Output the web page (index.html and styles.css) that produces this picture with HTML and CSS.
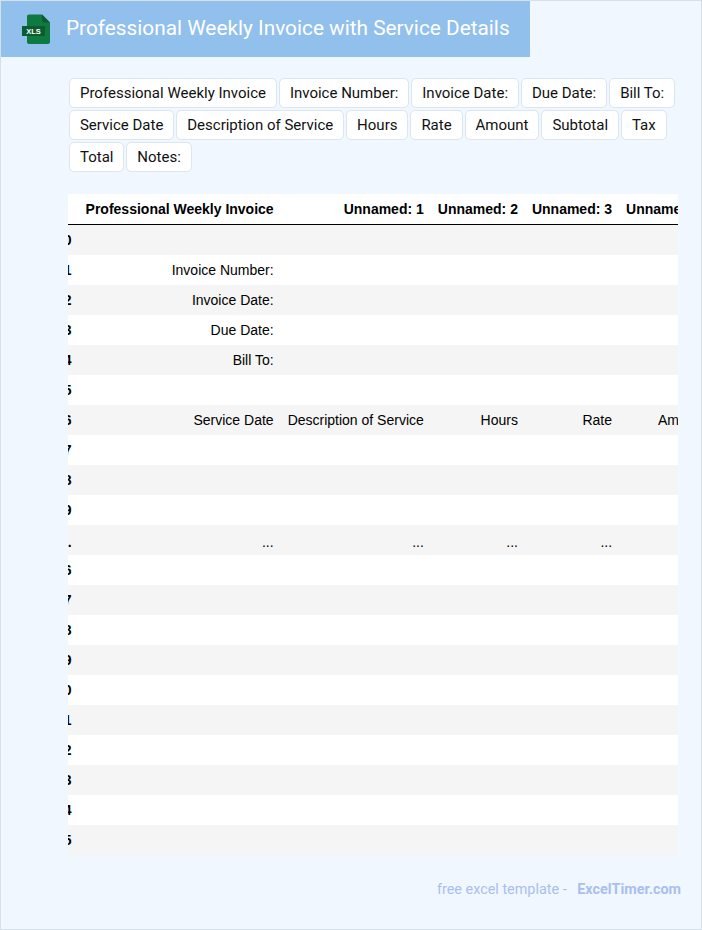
FILE: index.html
```html
<!DOCTYPE html>
<html lang="en">
<head>
<meta charset="utf-8">
<title>Professional Weekly Invoice with Service Details</title>
<link rel="stylesheet" href="styles.css">
</head>
<body>
<div class="page">
  <header class="banner">
    <svg class="logo" width="30" height="30" viewBox="0 0 30 30" aria-hidden="true">
      <path d="M6 2.500C6 1.400 6.900 0.500 8 0.500H21L29 8.500V28C29 29.100 28.100 30 27 30H8C6.900 30 6 29.100 6 28Z" fill="#0f7a40"/>
      <path d="M21 0.500L29 8.500H23C21.900 8.500 21 7.600 21 6.500Z" fill="#0b5c30"/>
      <rect x="1" y="12" width="23" height="10" fill="#0b5c30"/>
      <text class="logo-text" x="12.500" y="20" text-anchor="middle">XLS</text>
    </svg>
    <h1 class="title">Professional Weekly Invoice with Service Details</h1>
  </header>
  <main class="content">
    <nav class="chips">
      <span class="chip">Professional Weekly Invoice</span>
      <span class="chip">Invoice Number:</span>
      <span class="chip">Invoice Date:</span>
      <span class="chip">Due Date:</span>
      <span class="chip">Bill To:</span>
      <span class="chip">Service Date</span>
      <span class="chip">Description of Service</span>
      <span class="chip">Hours</span>
      <span class="chip">Rate</span>
      <span class="chip">Amount</span>
      <span class="chip">Subtotal</span>
      <span class="chip">Tax</span>
      <span class="chip">Total</span>
      <span class="chip">Notes:</span>
    </nav>
    <div class="table-wrap">
      <table class="sheet">
        <thead>
          <tr><th></th><th>Professional Weekly Invoice</th><th>Unnamed: 1</th><th>Unnamed: 2</th><th>Unnamed: 3</th><th>Unnamed: 4</th></tr>
        </thead>
        <tbody>
          <tr><th>0</th><td></td><td></td><td></td><td></td><td></td></tr>
          <tr><th>1</th><td>Invoice Number:</td><td></td><td></td><td></td><td></td></tr>
          <tr><th>2</th><td>Invoice Date:</td><td></td><td></td><td></td><td></td></tr>
          <tr><th>3</th><td>Due Date:</td><td></td><td></td><td></td><td></td></tr>
          <tr><th>4</th><td>Bill To:</td><td></td><td></td><td></td><td></td></tr>
          <tr><th>5</th><td></td><td></td><td></td><td></td><td></td></tr>
          <tr><th>6</th><td>Service Date</td><td>Description of Service</td><td>Hours</td><td>Rate</td><td>Amount</td></tr>
          <tr><th>7</th><td></td><td></td><td></td><td></td><td></td></tr>
          <tr><th>8</th><td></td><td></td><td></td><td></td><td></td></tr>
          <tr><th>9</th><td></td><td></td><td></td><td></td><td></td></tr>
          <tr class="ellipsis"><th>...</th><td>...</td><td>...</td><td>...</td><td>...</td><td>...</td></tr>
          <tr><th>16</th><td></td><td></td><td></td><td></td><td></td></tr>
          <tr><th>17</th><td></td><td></td><td></td><td></td><td></td></tr>
          <tr><th>18</th><td></td><td></td><td></td><td></td><td></td></tr>
          <tr><th>19</th><td></td><td></td><td></td><td></td><td></td></tr>
          <tr><th>20</th><td></td><td></td><td></td><td></td><td></td></tr>
          <tr><th>21</th><td></td><td></td><td></td><td></td><td></td></tr>
          <tr><th>22</th><td></td><td></td><td></td><td></td><td></td></tr>
          <tr><th>23</th><td></td><td></td><td></td><td></td><td></td></tr>
          <tr><th>24</th><td></td><td></td><td></td><td></td><td></td></tr>
          <tr><th>25</th><td></td><td></td><td></td><td></td><td></td></tr>
        </tbody>
      </table>
    </div>
  </main>
  <footer class="footer">
    <span class="footer-label">free excel template -</span>
    <span class="footer-brand">ExcelTimer.com</span>
  </footer>
</div>
</body>
</html>
```
FILE: styles.css
```css
* { box-sizing: border-box; }
html, body { margin: 0; padding: 0; }
body { font-family: Roboto, "Liberation Sans", sans-serif; }

.page {
  width: 702px;
  height: 930px;
  background: #f0f7ff;
  border: 1px solid #d5e0ea;
  overflow: hidden;
}

.banner {
  width: 529px;
  height: 56px;
  background: #92c0ec;
  display: flex;
  align-items: center;
  padding-left: 20px;
}
.logo { flex: none; margin-right: 15px; }
.logo-text {
  font-family: "Liberation Sans", sans-serif;
  font-size: 7.500px;
  font-weight: 700;
  fill: #fff;
}
.title {
  margin: 0 0 2px;
  font-size: 20.8px;
  font-weight: 400;
  color: #fff;
  white-space: nowrap;
}

.content { padding: 21px 23px 0 67px; }

.chips {
  display: flex;
  flex-wrap: wrap;
  gap: 2px;
  width: 609px;
  margin-left: 1px;
}
.chip {
  height: 30px;
  padding: 0 9.96px;
  display: flex;
  align-items: center;
  background: #fff;
  border: 1px solid #dbe6f2;
  border-radius: 5px;
  font-size: 15px;
  color: #111;
  white-space: nowrap;
}

.table-wrap {
  width: 610px;
  margin-top: 22px;
  overflow: hidden;
}
.sheet {
  margin-left: -19px;
  border-collapse: separate;
  border-spacing: 0;
  font-family: "Liberation Sans", sans-serif;
  font-size: 14px;
  color: #000;
  background: #fff;
}
.sheet th, .sheet td {
  padding: 0 7px;
  height: 30px;
  text-align: right;
  font-weight: 400;
  white-space: nowrap;
}
.sheet th { font-weight: 700; }
.sheet thead th {
  height: 31px;
  border-bottom: 1px solid #000;
}
.sheet tbody tr:nth-child(odd) { background: #f5f5f5; }
.sheet .ellipsis td, .sheet .ellipsis th { padding-top: 4px; }

.footer {
  display: flex;
  justify-content: flex-end;
  gap: 10.6px;
  padding: 26px 20px 0 0;
  font-size: 14.4px;
  color: #a9bff0;
}
.footer-brand { font-weight: 700; }
```
